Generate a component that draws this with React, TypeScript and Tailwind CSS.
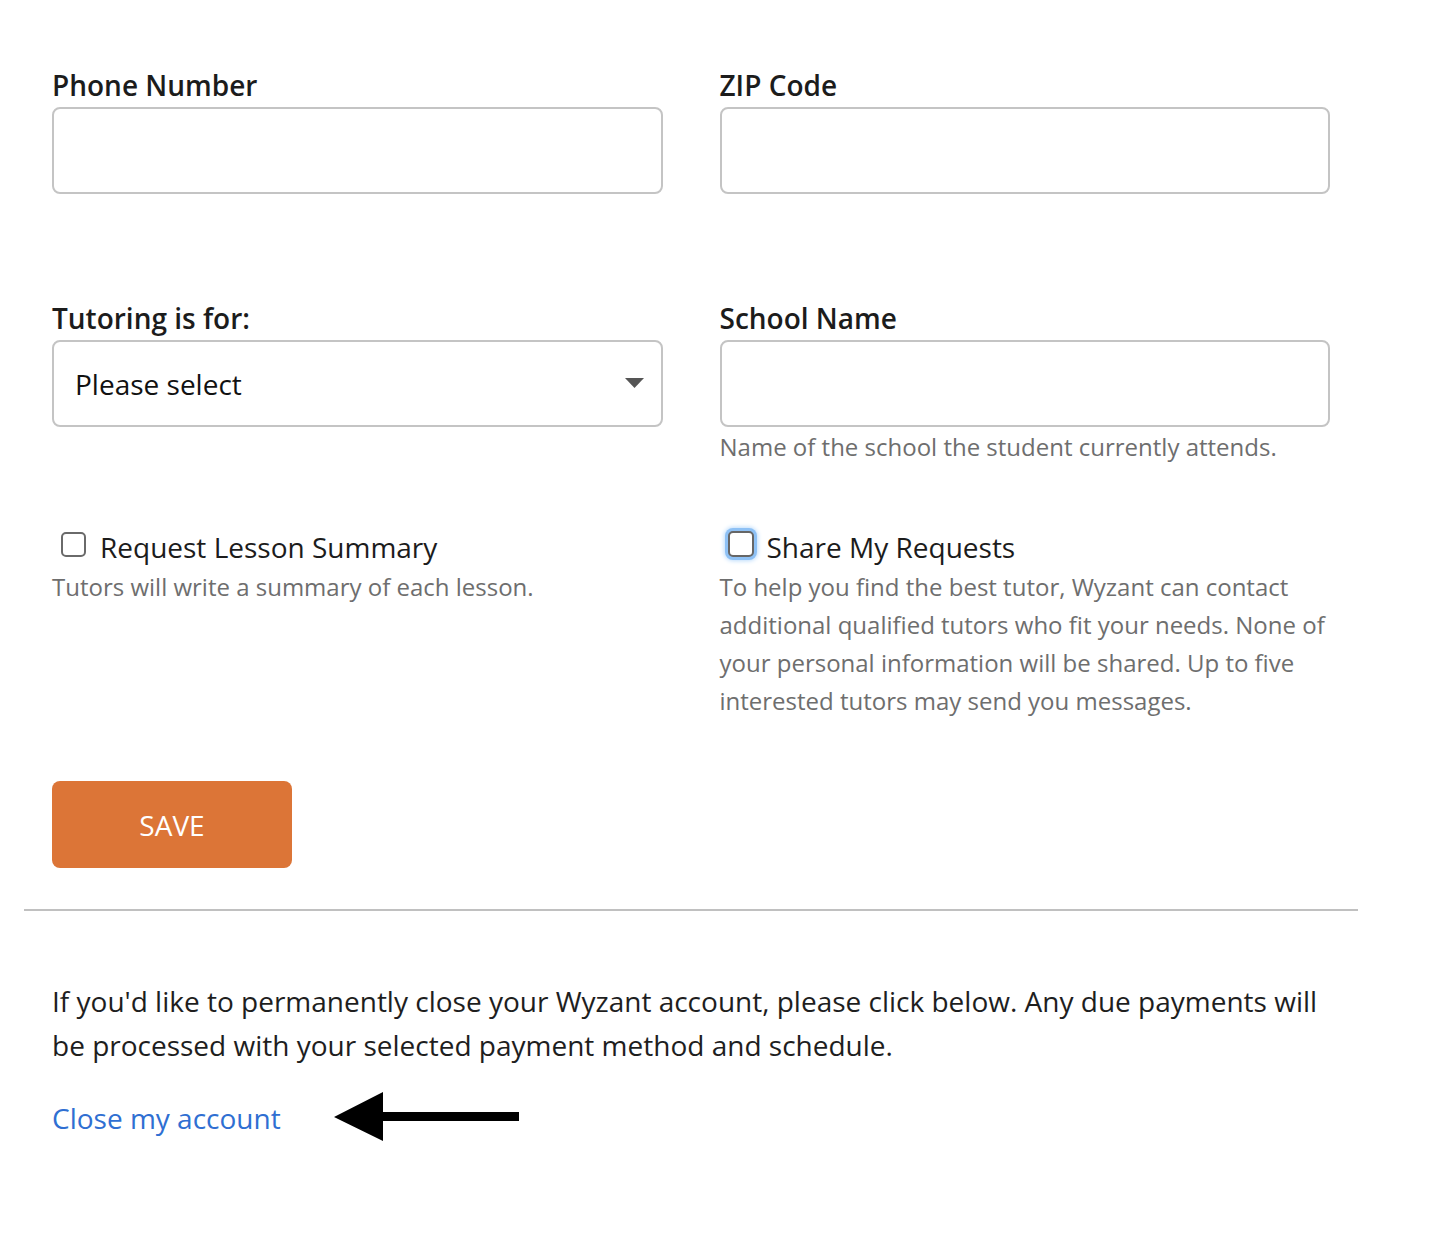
import React from "react";

interface FieldLabelProps {
  children: React.ReactNode;
}

function FieldLabel({ children }: FieldLabelProps) {
  return (
    <label className="block text-[28px] leading-[36px] font-semibold text-[#1c1c1c] mb-[4px]">
      {children}
    </label>
  );
}

function TextBox() {
  return (
    <input
      type="text"
      className="block w-full h-[87px] rounded-[8px] border-2 border-[#c4c4c4] bg-white px-[21px] text-[28px] outline-none"
    />
  );
}

interface CheckRowProps {
  label: string;
  focused?: boolean;
}

function CheckRow({ label, focused }: CheckRowProps) {
  return (
    <div className="flex items-center h-[40px]">
      <span
        className={
          focused
            ? "ml-[8px] w-[26px] h-[26px] rounded-[5px] border-2 border-[#666] bg-white shadow-[0_0_0_3px_#8ec1f5,0_0_4px_4px_#bcdcfb] mt-[-6px]"
            : "ml-[9px] w-[25px] h-[25px] rounded-[5px] border-2 border-[#6a6a6a] bg-white mt-[-6px]"
        }
      />
      <span className={focused ? "ml-[13px] text-[28px] text-[#1c1c1c]" : "ml-[14px] text-[28px] text-[#1c1c1c]"}>
        {label}
      </span>
    </div>
  );
}

export default function App() {
  return (
    <div className="min-h-screen bg-white" style={{ fontFamily: '"Open Sans", "Noto Sans", sans-serif' }}>
      <div className="w-[1334px] ml-[24px] pt-[67px]">
        <div className="px-[28px]">
          {/* Contact row */}
          <div className="grid grid-cols-2 gap-x-[57px]">
            <div>
              <FieldLabel>Phone Number</FieldLabel>
              <TextBox />
            </div>
            <div>
              <FieldLabel>ZIP Code</FieldLabel>
              <TextBox />
            </div>
          </div>

          {/* Student row */}
          <div className="grid grid-cols-2 gap-x-[57px] mt-[106px]">
            <div>
              <FieldLabel>Tutoring is for:</FieldLabel>
              <div className="relative h-[87px] rounded-[8px] border-2 border-[#c4c4c4] bg-white flex items-center pl-[21px]">
                <span className="text-[28px] text-[#111]">Please select</span>
                <svg
                  className="absolute right-[17px] top-[36px]"
                  width="19"
                  height="10"
                  viewBox="0 0 19 10"
                >
                  <path d="M0 0h19L9.5 10z" fill="#555" />
                </svg>
              </div>
            </div>
            <div>
              <FieldLabel>School Name</FieldLabel>
              <TextBox />
              <p className="mt-[1px] text-[24px] leading-[38px] text-[#6e6e6e]">
                Name of the school the student currently attends.
              </p>
            </div>
          </div>

          {/* Options row */}
          <div className="grid grid-cols-2 gap-x-[57px] mt-[61px]">
            <div>
              <CheckRow label="Request Lesson Summary" />
              <p className="mt-[1px] text-[24px] leading-[38px] text-[#6e6e6e]">
                Tutors will write a summary of each lesson.
              </p>
            </div>
            <div>
              <CheckRow label="Share My Requests" focused />
              <p className="mt-[1px] text-[24px] leading-[38px] text-[#6e6e6e]">
                To help you find the best tutor, Wyzant can contact additional qualified tutors who fit your
                needs. None of your personal information will be shared. Up to five interested tutors may send
                you messages.
              </p>
            </div>
          </div>

          <button className="mt-[61px] w-[240px] h-[87px] rounded-[8px] bg-[#dc7537] text-white text-[28px] uppercase">
            Save
          </button>
        </div>

        <hr className="mt-[41px] border-0 border-t-2 border-[#c0c0c0]" />

        {/* Close account */}
        <div className="px-[28px] pt-[68px] pb-[100px]">
          <p className="text-[28px] leading-[44px] text-[#1e1e1e] pr-[10px]">
            If you'd like to permanently close your Wyzant account, please click below. Any due payments will be
            processed with your selected payment method and schedule.
          </p>
          <div className="mt-[29px] flex items-center h-[44px]">
            <a href="#" className="text-[28px] text-[#2f6fd2]">
              Close my account
            </a>
            <svg className="ml-[53px] mt-[-4px]" width="186" height="51" viewBox="0 0 186 51">
              <path d="M0 26L49 1V21H185V30H49V50Z" fill="#000" />
            </svg>
          </div>
        </div>
      </div>
    </div>
  );
}
